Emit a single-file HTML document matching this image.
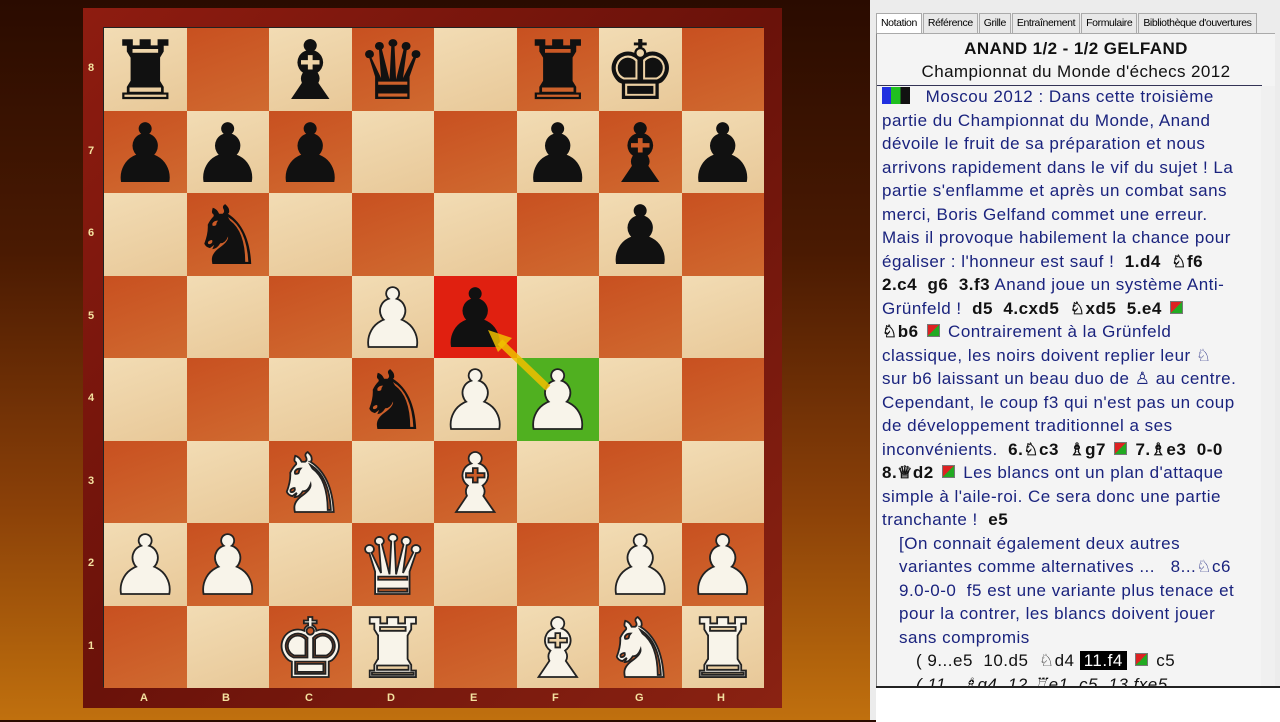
<!DOCTYPE html>
<html><head><meta charset="utf-8"><style>
body{margin:0;width:1280px;height:720px;overflow:hidden;background:linear-gradient(180deg,#2a0b00 0%,#4a1a02 35%,#8a4008 70%,#c0700e 100%);font-family:"Liberation Sans",sans-serif;position:relative}
#frame{position:absolute;left:83px;top:8px;width:699px;height:700px;background:linear-gradient(135deg,#8e1c10,#6a120a 50%,#8a2212);}
#board{position:absolute;left:103px;top:27px;width:660px;height:660px;display:grid;grid-template-columns:repeat(8,82.5px);grid-template-rows:repeat(8,82.5px);border:1px solid #222;box-sizing:border-box}
.sq{position:relative;display:flex;align-items:center;justify-content:center;font-family:"DejaVu Sans",sans-serif;font-size:82px;line-height:1;padding-top:6px;box-sizing:border-box}
.l{background:linear-gradient(160deg,#f2dcb4,#e8c898)}.d{background:linear-gradient(160deg,#c85020,#d06a30)}
.b{color:#111}.w{color:#f8f4ea;-webkit-text-stroke:1.8px #222}
.rk{position:absolute;left:88px;color:#f4e2a0;font-size:11px;font-weight:bold}
.fl{position:absolute;top:692px;color:#f4e2a0;font-size:11px;font-weight:bold}
#panel{position:absolute;left:870px;top:0;width:410px;height:720px;background:#ececec}
#tabs{position:absolute;left:6px;top:13px;height:20px;display:flex;font-size:10.5px;white-space:nowrap}
#tabs div{border:1px solid #aaa;border-bottom:none;padding:3px 4px 2px;background:#e8e8e8;margin-right:1px;letter-spacing:-0.4px}
#tabs div:first-child{background:#fff}
#content{position:absolute;left:6px;top:33px;width:398px;height:652px;background:#f4f4f4;border-left:1px solid #888;border-top:1px solid #aaa;overflow:hidden}
.hd{text-align:center;font-size:17px;color:#111;letter-spacing:0.4px}
#txt{position:absolute;left:5px;top:51px;width:385px;color:#1a237e;font-size:17px;line-height:23.5px;white-space:nowrap;letter-spacing:0.5px}
b{color:#111}
.ic{display:inline-block;width:11px;height:11px;background:linear-gradient(135deg,#d22 50%,#2a2 50%);border:1px solid #777;vertical-align:0;margin:0 3px}
#bot{position:absolute;left:6px;top:686px;width:404px;height:34px;background:#fff;border-top:2px solid #222}
#sb{position:absolute;right:0;top:52px;width:14px;height:600px;background:#f0f0f0}
</style></head><body>
<div id="frame"></div>
<div id="board">
<div class="sq l b">♜</div><div class="sq d"></div><div class="sq l b">♝</div><div class="sq d b">♛</div><div class="sq l"></div><div class="sq d b">♜</div><div class="sq l b">♚</div><div class="sq d"></div>
<div class="sq d b">♟</div><div class="sq l b">♟</div><div class="sq d b">♟</div><div class="sq l"></div><div class="sq d"></div><div class="sq l b">♟</div><div class="sq d b">♝</div><div class="sq l b">♟</div>
<div class="sq l"></div><div class="sq d b">♞</div><div class="sq l"></div><div class="sq d"></div><div class="sq l"></div><div class="sq d"></div><div class="sq l b">♟</div><div class="sq d"></div>
<div class="sq d"></div><div class="sq l"></div><div class="sq d"></div><div class="sq l w">♟</div><div class="sq b" style="background:#e02010">♟</div><div class="sq l"></div><div class="sq d"></div><div class="sq l"></div>
<div class="sq l"></div><div class="sq d"></div><div class="sq l"></div><div class="sq d b">♞</div><div class="sq l w">♟</div><div class="sq w" style="background:#50b020">♟</div><div class="sq l"></div><div class="sq d"></div>
<div class="sq d"></div><div class="sq l"></div><div class="sq d w">♞</div><div class="sq l"></div><div class="sq d w">♝</div><div class="sq l"></div><div class="sq d"></div><div class="sq l"></div>
<div class="sq l w">♟</div><div class="sq d w">♟</div><div class="sq l"></div><div class="sq d w">♛</div><div class="sq l"></div><div class="sq d"></div><div class="sq l w">♟</div><div class="sq d w">♟</div>
<div class="sq d"></div><div class="sq l"></div><div class="sq d w">♚</div><div class="sq l w">♜</div><div class="sq d"></div><div class="sq l w">♝</div><div class="sq d w">♞</div><div class="sq l w">♜</div>
</div>
<svg style="position:absolute;left:0;top:0" width="800" height="720"><line x1="548" y1="388" x2="500" y2="342" stroke="#f0c000" stroke-width="7" opacity="0.85"/><polygon points="488,330 512,338 498,352" fill="#f0c000" opacity="0.85"/></svg>
<div class="rk" style="top:62px">8</div><div class="rk" style="top:145px">7</div><div class="rk" style="top:227px">6</div><div class="rk" style="top:310px">5</div><div class="rk" style="top:392px">4</div><div class="rk" style="top:475px">3</div><div class="rk" style="top:557px">2</div><div class="rk" style="top:640px">1</div>
<div class="fl" style="left:140px">A</div><div class="fl" style="left:222px">B</div><div class="fl" style="left:305px">C</div><div class="fl" style="left:387px">D</div><div class="fl" style="left:470px">E</div><div class="fl" style="left:552px">F</div><div class="fl" style="left:635px">G</div><div class="fl" style="left:717px">H</div>
<div id="panel">
<div id="tabs"><div>Notation</div><div>Référence</div><div>Grille</div><div>Entraînement</div><div>Formulaire</div><div>Bibliothèque d'ouvertures</div></div>
<div id="content">
<div class="hd" style="margin-top:5px;font-weight:bold">ANAND 1/2 - 1/2 GELFAND</div>
<div class="hd" style="margin-top:3px">Championnat du Monde d'échecs 2012</div>
<div style="position:absolute;left:0;top:51px;width:385px;border-top:1px solid #335"></div>
<div id="sb"></div>
<div id="txt">
<div><span style="display:inline-block;width:28px;height:17px;background:linear-gradient(90deg,#2030e0 33%,#20c020 33% 66%,#111 66%);vertical-align:-2px"></span>&nbsp;&nbsp; Moscou 2012 : Dans cette troisième</div>
<div>partie du Championnat du Monde, Anand</div>
<div>dévoile le fruit de sa préparation et nous</div>
<div>arrivons rapidement dans le vif du sujet ! La</div>
<div>partie s'enflamme et après un combat sans</div>
<div>merci, Boris Gelfand commet une erreur.</div>
<div>Mais il provoque habilement la chance pour</div>
<div>égaliser : l'honneur est sauf ! &nbsp;<b>1.d4 &nbsp;♘f6</b></div>
<div><b>2.c4 &nbsp;g6 &nbsp;3.f3</b> Anand joue un système Anti-</div>
<div>Grünfeld ! &nbsp;<b>d5 &nbsp;4.cxd5 &nbsp;♘xd5 &nbsp;5.e4</b> <span class="ic"></span></div>
<div><b>♘b6</b> <span class="ic"></span> Contrairement à la Grünfeld</div>
<div>classique, les noirs doivent replier leur ♘</div>
<div>sur b6 laissant un beau duo de ♙ au centre.</div>
<div>Cependant, le coup f3 qui n'est pas un coup</div>
<div>de développement traditionnel a ses</div>
<div>inconvénients. &nbsp;<b>6.♘c3 &nbsp;♗g7</b> <span class="ic"></span> <b>7.♗e3 &nbsp;0-0</b></div>
<div><b>8.♕d2</b> <span class="ic"></span> Les blancs ont un plan d'attaque</div>
<div>simple à l'aile-roi. Ce sera donc une partie</div>
<div>tranchante ! &nbsp;<b>e5</b></div>
<div style="padding-left:17px">[On connait également deux autres</div>
<div style="padding-left:17px">variantes comme alternatives ... &nbsp; 8...♘c6</div>
<div style="padding-left:17px">9.0-0-0 &nbsp;f5 est une variante plus tenace et</div>
<div style="padding-left:17px">pour la contrer, les blancs doivent jouer</div>
<div style="padding-left:17px">sans compromis</div>
<div style="padding-left:34px;color:#111">( 9...e5 &nbsp;10.d5 &nbsp;♘d4 <span style="background:#000;color:#fff;padding:0 4px">11.f4</span> <span class="ic"></span> c5</div>
<div style="padding-left:34px;color:#111;font-style:italic">( 11...♗g4 &nbsp;12.♖e1 &nbsp;c5 &nbsp;13.fxe5</div>
</div>
</div>
<div id="bot"></div>
</div>
</body></html>
